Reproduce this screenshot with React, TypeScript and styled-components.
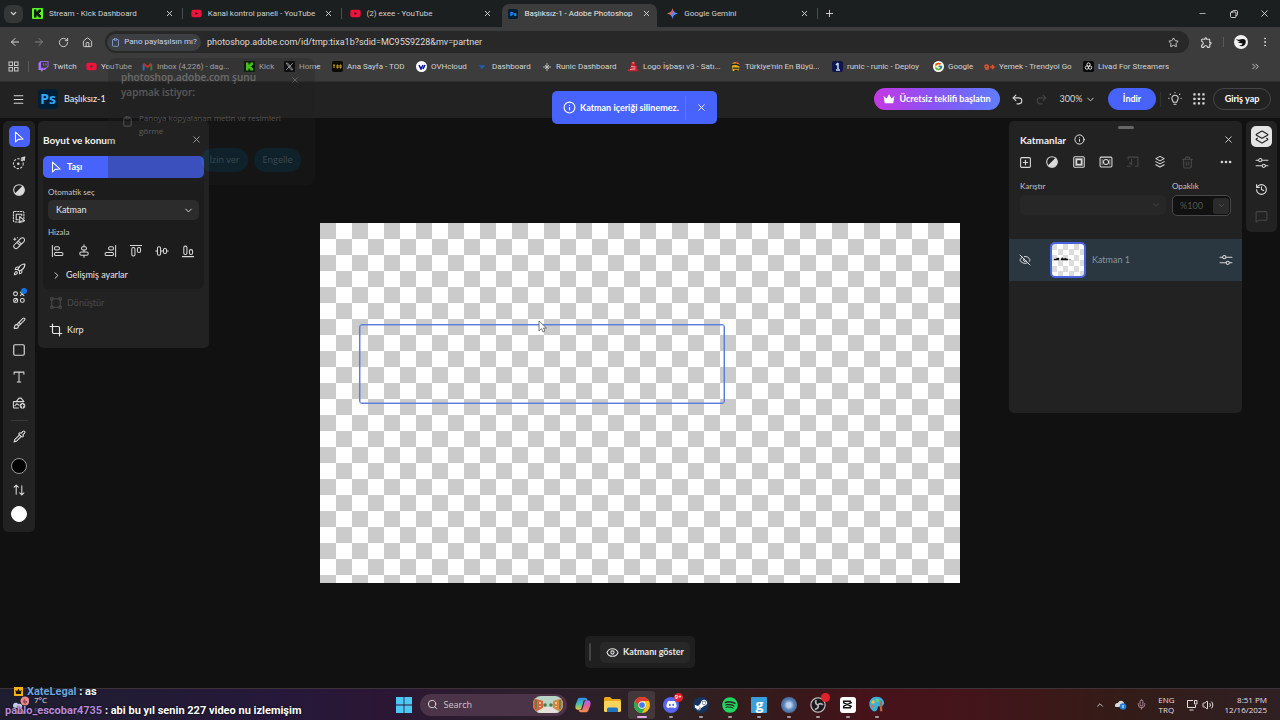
import React from "react";
import styled, { createGlobalStyle, css } from "styled-components";
import {
  ArrowLeft, ArrowRight, RotateCw, House, Star, EllipsisVertical, Ellipsis, Clipboard,
  X, ChevronDown, ChevronRight, ChevronUp, ChevronsRight, Plus, Minus, Menu, Info, Undo2, Redo2, Search,
  Square, EyeOff, Eye, Layers2, SquarePlus, Trash2, History, MessageSquare, Mic, Volume2, Crop,
  Rocket, Brush, Pipette,
} from "lucide-react";
import { FcGoogle } from "react-icons/fc";
import { MdOutlineExtension } from "react-icons/md";
import { FaTwitch, FaYoutube, FaSpotify, FaDiscord, FaSteamSymbol } from "react-icons/fa";

const ui = `Roboto, "Noto Sans", sans-serif`;
const system = `"Open Sans", "Noto Sans", sans-serif`;
const adobe = `Lato, "Open Sans", sans-serif`;

const GlobalStyle = createGlobalStyle`
  * { box-sizing: border-box; }
  body { margin: 0; background: #111; color: #e3e3e3; font-family: ${ui}; font-size: 8px; line-height: 12px; }
  button, input, select { font: inherit; color: inherit; }
  button { display: flex; align-items: center; justify-content: center; padding: 0; border: 0; background: none; flex: none; }
  a { color: inherit; text-decoration: none; }
  svg { display: block; flex: none; }
  h1, h2, p, ul { margin: 0; padding: 0; font-size: inherit; font-weight: inherit; list-style: none; }
`;

const Page = styled.div`
  position: relative;
  display: flex;
  flex-direction: column;
  min-height: 100vh;
`;

/* ---------- browser ---------- */
const TabStrip = styled.div`
  display: flex;
  align-items: center;
  height: 27px;
  padding: 0 0 0 4px;
  background: #1c1f1f;
`;
const TabSearch = styled.button`
  width: 19px;
  height: 18px;
  border-radius: 6px;
  background: #353737;
  margin-right: 3px;
`;
const Tabs = styled.div`
  display: flex;
  flex: 0 1 794px;
  min-width: 0;
  align-self: stretch;
  padding-top: 4px;
`;
const Tab = styled.div<{ $active?: boolean; $line?: boolean }>`
  position: relative;
  display: flex;
  align-items: center;
  gap: 6px;
  flex: 1 1 0;
  min-width: 0;
  margin-right: 4px;
  padding: 0 6px 4px;
  border-radius: 7px 7px 0 0;
  background: ${(p) => (p.$active ? "#3c3c3c" : "transparent")};
  color: ${(p) => (p.$active ? "#e8e8e8" : "#cfd1d1")};
  ${(p) => p.$line && css`
    &::after { content: ""; position: absolute; right: -2px; top: 4px; width: 1px; height: 11px; background: #4a4c4c; }
  `}
`;
const TabTitle = styled.span`
  flex: 1;
  min-width: 0;
  overflow: hidden;
  white-space: nowrap;
`;
const PlainButton = styled.button<{ $w: number; $color?: string }>`
  gap: 3px;
  width: ${(p) => p.$w}px;
  height: 20px;
  color: ${(p) => p.$color || "#d8d8d8"};
`;
const WindowButtons = styled.div`
  display: flex;
  margin-left: auto;
`;
const AddressRow = styled.div`
  display: flex;
  align-items: center;
  height: 28px;
  padding: 2px 5px 0 3px;
  background: #3c3c3c;
`;
const Omnibox = styled.div`
  display: flex;
  align-items: center;
  flex: 1;
  min-width: 0;
  height: 22px;
  margin: 0 6px;
  padding: 0 6px 0 2px;
  border-radius: 11px;
  background: #282828;
`;
const PasteChip = styled.button`
  gap: 4px;
  width: 94px;
  height: 17px;
  border-radius: 9px;
  background: #3d3e42;
  color: #c3d3f5;
  svg { color: #8fb0ea; }
`;
const UrlInput = styled.input`
  flex: 1;
  min-width: 0;
  padding: 0 0 0 6px;
  border: 0;
  outline: 0;
  background: transparent;
  color: #dcdcdc;
  font-size: 9px;
`;
const Divider = styled.span<{ $h: number; $c?: string; $m?: string }>`
  flex: none;
  width: 1px;
  height: ${(p) => p.$h}px;
  margin: ${(p) => p.$m || "0"};
  background: ${(p) => p.$c || "#5a5a5a"};
`;
const Avatar = styled.button`
  width: 14px;
  height: 14px;
  margin: 0 7px;
  border-radius: 50%;
  background: #f2f2f2;
`;
const BookmarkBar = styled.nav`
  display: flex;
  align-items: center;
  height: 26px;
  padding: 0 16px 3px 8px;
  background: #3c3c3c;
  color: #d2d2d2;
`;
const Bookmark = styled.a<{ $w: number }>`
  display: flex;
  align-items: center;
  gap: 4px;
  flex: 0 1 ${(p) => p.$w}px;
  min-width: 0;
  white-space: nowrap;
`;
const MoreBookmarks = styled.button`
  width: 18px;
  height: 20px;
  margin-left: auto;
`;
const Fav = styled.span<{ $bg?: string; $round?: boolean }>`
  display: flex;
  align-items: center;
  justify-content: center;
  flex: none;
  width: 11px;
  height: 11px;
  border-radius: ${(p) => (p.$round ? "50%" : "2px")};
  background: ${(p) => p.$bg || "transparent"};
`;

/* ---------- permission prompt ---------- */
const Prompt = styled.section`
  position: absolute;
  z-index: 5;
  left: 108px;
  top: 58px;
  width: 207px;
  height: 127px;
  padding: 12px 14px 0 13px;
  border-radius: 8px;
  background: #202020;
  color: #e3e3e3;
  font-family: ${system};
  opacity: 0.28;
`;
const PromptHead = styled.div`
  display: flex;
  justify-content: space-between;
  align-items: flex-start;
  font-size: 10px;
  font-weight: 600;
  line-height: 15px;
  h2 { width: 148px; }
`;
const PromptRow = styled.p`
  display: flex;
  gap: 6px;
  padding: 11px 0 0 1px;
  font-size: 8px;
  line-height: 13px;
  svg { margin-top: 5px; }
  span { width: 146px; }
`;
const PromptActions = styled.div`
  display: flex;
  justify-content: flex-end;
  gap: 6px;
  padding-top: 11px;
`;
const PromptButton = styled.button`
  width: 47px;
  height: 24px;
  border-radius: 12px;
  background: #0a4a70;
  color: #a4d4f0;
  font-size: 9px;
`;

/* ---------- editor ---------- */
const AppBar = styled.header`
  display: flex;
  align-items: center;
  height: 37px;
  padding: 0 9px 2px 8px;
  border-top: 1px solid #2f2f2f;
  background: #222;
  color: #f0f0f0;
  font-family: ${adobe};
  font-size: 9px;
`;
const Brand = styled.div`
  display: flex;
  align-items: center;
  gap: 6px;
  margin-left: 10px;
`;
const PsLogo = styled.span<{ $s: number }>`
  display: flex;
  align-items: center;
  justify-content: center;
  flex: none;
  width: ${(p) => p.$s}px;
  height: ${(p) => p.$s}px;
  border-radius: ${(p) => (p.$s > 12 ? 4 : 2)}px;
  background: #001e36;
  color: #31a8ff;
  font-family: ${system};
  font-size: ${(p) => (p.$s > 12 ? 14 : 6)}px;
  font-weight: 700;
`;
const AppBarRight = styled.div`
  display: flex;
  align-items: center;
  margin-left: auto;
`;
const Pill = styled.button<{ $w: number; $bg: string; $outline?: boolean }>`
  gap: 4px;
  width: ${(p) => p.$w}px;
  height: 22px;
  border-radius: 11px;
  background: ${(p) => p.$bg};
  ${(p) => p.$outline && "border: 1px solid #454545;"}
  color: #fff;
  font-weight: 700;
`;
const Toast = styled.div`
  position: absolute;
  z-index: 6;
  top: 91px;
  left: 0;
  right: 11px;
  display: flex;
  align-items: center;
  width: 165px;
  height: 33px;
  margin: 0 auto;
  padding-left: 11px;
  border-radius: 5px;
  background: #4763fb;
  color: #fff;
  font-family: ${adobe};
  font-size: 9px;
  font-weight: 700;
`;
const ToastText = styled.span`
  flex: 1;
  padding-left: 4px;
  white-space: nowrap;
`;
const Workspace = styled.main`
  position: relative;
  display: grid;
  grid-template-columns: minmax(0, 1fr) minmax(0, 2fr) minmax(0, 1fr);
  flex: 1;
  background: #111;
  font-family: ${adobe};
  font-size: 9px;
`;
const Dock = styled.div<{ $right?: boolean }>`
  display: flex;
  align-items: flex-start;
  justify-content: ${(p) => (p.$right ? "flex-end" : "flex-start")};
  gap: ${(p) => (p.$right ? 4 : 3)}px;
  padding: 3px;
`;
const Rail = styled.div<{ $w: number }>`
  display: flex;
  flex-direction: column;
  align-items: center;
  flex: none;
  width: ${(p) => p.$w}px;
  padding: 5px 0;
  border-radius: 5px;
  background: #222;
`;
const ToolGroup = styled.div<{ $h: number }>`
  display: flex;
  flex-direction: column;
  justify-content: space-between;
  min-height: ${(p) => p.$h}px;
`;
const Tool = styled.button<{ $bg?: string; $color?: string }>`
  position: relative;
  width: 21px;
  height: 21px;
  border-radius: 5px;
  background: ${(p) => p.$bg || "transparent"};
  color: ${(p) => p.$color || "#dadada"};
`;
const NewDot = styled.span`
  position: absolute;
  right: 0;
  top: 2px;
  width: 6px;
  height: 6px;
  margin-right: 3px;
  border-radius: 50%;
  background: #1473e6;
`;
const RailLine = styled.span`
  width: 17px;
  height: 1px;
  margin: 6px 0 5px;
  background: #3a3a3a;
`;
const Colors = styled.div`
  display: flex;
  flex-direction: column;
  align-items: center;
  gap: 6px;
  padding: 11px 0 5px;
`;
const Swatch = styled.button<{ $c: string }>`
  width: 16px;
  height: 16px;
  border: 1px solid ${(p) => (p.$c === "#000" ? "#9a9a9a" : "#fff")};
  border-radius: 50%;
  background: ${(p) => p.$c};
`;
const Panel = styled.section<{ $w: number; $h: number }>`
  flex: none;
  width: ${(p) => p.$w}px;
  min-height: ${(p) => p.$h}px;
  border-radius: 5px;
  background: #222;
`;
const PanelHead = styled.div`
  display: flex;
  align-items: center;
  justify-content: space-between;
  height: 35px;
  padding: 2px 3px 0 5px;
  color: #f4f4f4;
  h2 { font-size: 10px; font-weight: 700; }
`;
const MoveBlock = styled.div`
  margin: 0 5px;
  border-radius: 5px;
  background: #1c1c1c;
`;
const MoveButton = styled.button`
  justify-content: flex-start;
  gap: 4px;
  width: 100%;
  height: 22px;
  padding-left: 6px;
  border-radius: 5px;
  background: #4763fb;
  color: #fff;
  font-weight: 700;
`;
const FieldLabel = styled.label<{ $top?: number }>`
  display: block;
  padding: ${(p) => p.$top || 0}px 0 2px 5px;
  color: #c4c4c4;
  font-size: 8px;
  line-height: 12px;
`;
const SelectBox = styled.div<{ $muted?: boolean }>`
  display: flex;
  align-items: center;
  position: relative;
  height: 20px;
  border-radius: 5px;
  background: ${(p) => (p.$muted ? "#272727" : "#2c2c2c")};
  color: ${(p) => (p.$muted ? "#484848" : "#e6e6e6")};
  select {
    appearance: none;
    width: 100%;
    height: 100%;
    padding: 0 8px;
    border: 0;
    border-radius: 5px;
    background: transparent;
  }
  svg { position: absolute; right: 5px; pointer-events: none; }
`;
const MoveSelect = styled(SelectBox)`
  margin: 0 5px;
`;
const AlignRow = styled.div`
  display: flex;
  justify-content: space-between;
  padding: 1px 6px 0 5px;
`;
const PanelRow = styled.button<{ $h: number; $pad: number; $dim?: boolean }>`
  justify-content: flex-start;
  gap: 4px;
  width: 100%;
  height: ${(p) => p.$h}px;
  padding-left: ${(p) => p.$pad}px;
  color: ${(p) => (p.$dim ? "#4a4a4a" : "#e6e6e6")};
`;
const Stage = styled.div`
  display: flex;
  align-items: center;
`;
const Canvas = styled.div`
  position: relative;
  width: 100%;
  aspect-ratio: 16 / 9;
  background: conic-gradient(#fff 25%, #cbcbcb 0 50%, #fff 0 75%, #cbcbcb 0) 0 0 / 32px 32px;
`;
const Selection = styled.div`
  position: absolute;
  left: 39px;
  top: 101px;
  width: 366px;
  height: 80px;
  border: 1px solid #5b7ddc;
  border-radius: 3px;
  box-shadow: inset 0 0 0 1px rgba(91, 125, 220, 0.45);
`;
const Pointer = styled.svg`
  position: absolute;
  left: 218px;
  top: 97px;
`;
const ContextBar = styled.div`
  position: absolute;
  left: 0;
  right: 0;
  bottom: 20px;
  display: flex;
  align-items: center;
  justify-content: space-between;
  width: 110px;
  height: 32px;
  margin: 0 auto;
  padding: 0 5px 0 4px;
  border-radius: 5px;
  background: #1f1f1f;
`;
const BarHandle = styled.span`
  width: 2px;
  height: 18px;
  border-radius: 1px;
  background: #444;
`;
const ShowLayer = styled.button`
  gap: 4px;
  width: 90px;
  height: 21px;
  border-radius: 5px;
  background: #282828;
  color: #e6e6e6;
  font-weight: 700;
`;

/* layers */
const LayersTop = styled.div`
  height: 8px;
  padding-top: 5px;
`;
const Grip = styled.span`
  display: block;
  width: 16px;
  height: 3px;
  margin: 0 auto;
  border-radius: 2px;
  background: #666;
`;
const LayersHead = styled.div`
  display: flex;
  align-items: center;
  gap: 8px;
  height: 21px;
  padding: 0 4px 0 11px;
  color: #f0f0f0;
  h2 { font-size: 10px; font-weight: 700; }
  button { margin-left: auto; }
`;
const LayerTools = styled.div`
  display: flex;
  align-items: center;
  height: 24px;
  padding: 0 6px;
`;
const LayerTool = styled.button<{ $dim?: boolean }>`
  width: 20px;
  height: 20px;
  margin-right: 7px;
  color: ${(p) => (p.$dim ? "#484848" : "#dadada")};
  &:last-child { margin: 0 0 0 auto; }
`;
const BlendRow = styled.div`
  display: flex;
  gap: 6px;
  padding: 6px 11px 0;
`;
const Blend = styled.div<{ $w?: number }>`
  flex: ${(p) => (p.$w ? `none` : "1")};
  ${(p) => p.$w && `width: ${p.$w}px;`}
  label { padding-left: 0; padding-bottom: 3px; }
`;
const OpacityBox = styled.div`
  display: flex;
  align-items: center;
  height: 21px;
  padding: 1px;
  border: 1px solid #484848;
  border-radius: 5px;
  background: #111;
  color: #555;
  input { flex: 1; min-width: 0; padding: 0 0 0 6px; border: 0; background: transparent; }
  button { width: 16px; height: 16px; border-radius: 3px; background: #2b2b2b; }
`;
const LayerRow = styled.div`
  display: flex;
  align-items: center;
  height: 42px;
  margin-top: 23px;
  padding: 0 5px 0 6px;
  background: #2a3640;
`;
const Thumb = styled.span`
  display: flex;
  width: 36px;
  height: 36px;
  margin: 0 6px 0 15px;
  border: 2px solid #4a63e0;
  border-radius: 5px;
  background: conic-gradient(#fff 25%, #dcdcdc 0 50%, #fff 0 75%, #dcdcdc 0) 0 0 / 11px 11px;
`;
const LayerName = styled.span`
  flex: 1;
  color: #8b959c;
`;

/* ---------- taskbar ---------- */
const Taskbar = styled.footer`
  display: grid;
  grid-template-columns: minmax(0, 1fr) auto minmax(0, 1fr);
  align-items: center;
  height: 32px;
  border-top: 1px solid #3d3238;
  font-family: ${system};
  background: linear-gradient(90deg, #1e1e30 0%, #26183a 22%, #2b1634 30%, #2c1d2e 38%, #2e2224 52%, #38181a 62%, #47121a 68%, #43151a 76%, #331c17 88%, #2f2024 100%);
`;
const Weather = styled.div`
  display: flex;
  align-items: center;
  gap: 5px;
  padding: 0 12px;
  color: #e0e0e0;
  line-height: 10px;
  small { display: block; font-size: 8px; color: #5c5768; }
`;
const Apps = styled.div`
  display: flex;
  align-items: center;
  padding-left: 1px;
`;
const Pinned = styled.div`
  display: flex;
  justify-content: space-between;
  width: 321px;
`;
const AppButton = styled.button<{ $active?: boolean; $run?: boolean }>`
  position: relative;
  width: 27px;
  height: 28px;
  border-radius: 3px;
  background: ${(p) => (p.$active ? "rgba(255,255,255,.1)" : "transparent")};
  ${(p) => (p.$run || p.$active) && css`
    &::after {
      content: "";
      position: absolute;
      bottom: 1px;
      width: ${p.$active ? 10 : 4}px;
      height: 2px;
      border-radius: 1px;
      background: ${p.$active ? "#e6a8e6" : "#a89a9e"};
    }
  `}
`;
const SearchBox = styled.label`
  display: flex;
  align-items: center;
  gap: 6px;
  width: 147px;
  height: 22px;
  margin: 0 3px 0 2px;
  padding: 0 4px 0 7px;
  border-radius: 11px;
  background: #4b3448;
  input {
    flex: 1;
    min-width: 0;
    padding: 0;
    border: 0;
    background: transparent;
    font-size: 9px;
    &::placeholder { color: #d0c4cf; opacity: 1; }
  }
`;
const Badge = styled.span`
  position: absolute;
  top: 2px;
  right: 2px;
  width: 9px;
  height: 9px;
  border-radius: 50%;
  background: #e0222c;
  color: #fff;
  font-size: 6px;
  font-weight: 600;
  line-height: 9px;
`;
const Tray = styled.div`
  display: flex;
  align-items: center;
  justify-content: flex-end;
  padding-right: 13px;
  line-height: 10px;
  color: #e6dfe0;
`;
const TrayIcons = styled.div<{ $gap: number }>`
  display: flex;
  align-items: center;
  gap: ${(p) => p.$gap}px;
`;
const TrayText = styled.div<{ $right?: boolean }>`
  margin: 0 ${(p) => (p.$right ? 0 : 11)}px 0 11px;
  text-align: ${(p) => (p.$right ? "right" : "center")};
`;
const Chat = styled.ul`
  position: absolute;
  z-index: 7;
  left: 5px;
  bottom: 0;
  color: #fff;
  font-family: Roboto, sans-serif;
  font-size: 11px;
  font-weight: 700;
  line-height: 13px;
`;
const ChatLine = styled.li`
  display: flex;
  align-items: center;
  gap: 4px;
  height: 19px;
  text-shadow: 0 0 2px #000;
`;
const ChatUser = styled.span<{ $c: string }>`
  color: ${(p) => p.$c};
`;
const ChatBadge = styled.span`
  display: flex;
  align-items: center;
  justify-content: center;
  width: 9px;
  height: 9px;
  margin-left: 9px;
  background: #f5b315;
`;

/* ---------- drawings ---------- */
type GlyphProps = { size?: number; children: React.ReactNode; w?: number };
const Glyph = ({ size = 14, w = 1.5, children }: GlyphProps) => (
  <svg width={size} height={size} viewBox="0 0 20 20" fill="none" stroke="currentColor" strokeWidth={w} strokeLinecap="round" strokeLinejoin="round" aria-hidden>
    {children}
  </svg>
);
const MoveGlyph = () => <Glyph><path d="M5 3v14l4-3.6L16 13z" /></Glyph>;
const SelectGlyph = () => (
  <Glyph>
    <circle cx="9" cy="11" r="7" strokeDasharray="2.200 3" />
    <circle cx="9" cy="11" r="1.800" fill="currentColor" stroke="none" />
    <path d="M14 6.500l4.500-5M13.500 3l4.500-1.500-.5 5z" />
  </Glyph>
);
const AdjustGlyph = () => (
  <Glyph>
    <circle cx="10" cy="10" r="7.600" />
    <path d="M15 5A7 7 0 0 1 5 15z" fill="currentColor" />
  </Glyph>
);
const RectSelectGlyph = () => (
  <Glyph>
    <rect x="2" y="2" width="15" height="15" rx="2" strokeDasharray="2 2" />
    <path d="M9 14H6V6h8v2" />
    <path d="M11 9v9l3-2.400 4-.2z" fill="#222" />
  </Glyph>
);
const HealGlyph = () => (
  <Glyph>
    <path d="M3.500 12.500l9-9a3 3 0 0 1 4.500 4.500l-9 9a3 3 0 0 1-4.500-4.500zM7 9l4.500 4.500M9 7l4.500 4.500M4 3v3M2.500 4.500h3M8 2v.5" />
  </Glyph>
);
const GenerateGlyph = () => (
  <Glyph>
    <circle cx="5" cy="5.500" r="2.800" /><path d="M12 3l5 5M12 8l3-3" />
    <rect x="2.500" y="12" width="5.500" height="5.500" rx="1.500" /><rect x="12" y="12" width="5.500" height="5.500" rx="2.500" />
    <path d="M4 16l3-3" />
  </Glyph>
);
const TypeGlyph = () => <Glyph><path d="M3 6V3h14v3M10 3v14M7.500 17h5" /></Glyph>;
const AddImageGlyph = () => (
  <Glyph>
    <path d="M9 17H3a1 1 0 0 1-1-1V9a1 1 0 0 1 1-1h13M6 8l4-5h3l4 5M4 14l3-3 3 2" />
    <circle cx="15" cy="14" r="4" fill="currentColor" stroke="none" />
    <path d="M15 12v4M13 14h4" stroke="#222" />
  </Glyph>
);
const SwapGlyph = () => <Glyph><path d="M6 16V3M3 6l3-3 3 3M14 4v13M11 14l3 3 3-3" /></Glyph>;
const TransformGlyph = () => (
  <Glyph>
    <rect x="4" y="4" width="12" height="12" />
    {[[4, 4], [16, 4], [4, 16], [16, 16]].map(([x, y]) => <rect key={`${x}-${y}`} x={x - 1.5} y={y - 1.5} width="3" height="3" fill="#222" />)}
  </Glyph>
);
const RestoreGlyph = () => <Glyph size={10} w={1.8}><rect x="3" y="6" width="11" height="11" rx="2" /><path d="M7 6V5a2 2 0 0 1 2-2h6a2 2 0 0 1 2 2v6a2 2 0 0 1-2 2h-1" /></Glyph>;
const alignShapes = [
  <><path d="M2 2v16" /><rect x="5" y="4" width="7" height="4.500" rx="2" /><rect x="5" y="12" width="12" height="4.500" rx="2" /></>,
  <><path d="M10 1v2.500M10 8.500V11M10 16v3" /><rect x="6.500" y="4" width="7" height="4.500" rx="2" /><rect x="4" y="11.500" width="12" height="4.500" rx="2" /></>,
  <><path d="M18 2v16" /><rect x="8" y="4" width="7" height="4.500" rx="2" /><rect x="3" y="12" width="12" height="4.500" rx="2" /></>,
  <><path d="M2 2h16" /><rect x="4" y="5" width="4.500" height="12" rx="2" /><rect x="12" y="5" width="4.500" height="7" rx="2" /></>,
  <><path d="M1 10h2M8.500 10h3M17 10h2" /><rect x="3.500" y="4" width="4.500" height="12" rx="2" /><rect x="12" y="6.500" width="4.500" height="7" rx="2" /></>,
  <><path d="M2 18h16" /><rect x="4" y="3" width="4.500" height="12" rx="2" /><rect x="12" y="8" width="4.500" height="7" rx="2" /></>,
];
const alignNames = ["Sola", "Yatay ortaya", "Sağa", "Üste", "Dikey ortaya", "Alta"];
const GroupGlyph = () => <Glyph><rect x="2.500" y="2.500" width="15" height="15" rx="1.500" /><rect x="6.500" y="6.500" width="7" height="7" strokeWidth="2" /><path d="M5 5h10v10H5z" opacity=".5" /></Glyph>;
const MaskGlyph = () => <Glyph><rect x="1.500" y="3" width="17" height="14" rx="1.500" /><circle cx="10" cy="10" r="3.600" /><path d="M4.500 6v8M15.500 6v8" opacity=".6" /></Glyph>;
const ClipGlyph = () => <Glyph><path d="M3 6V3h14v13h-4M8 6v8M5 11l3 3M2 16h4" /></Glyph>;
const StackGlyph = () => <Glyph><path d="M10 2l6 3.200-6 3.200-6-3.200zM4 9.500l6 3.200 6-3.200M4 14l6 3.200L16 14" /></Glyph>;
const SlidersGlyph = () => <Glyph><path d="M1.500 6H5M10 6h8.500M1.500 14H10M15 14h3.500" /><circle cx="7.500" cy="6" r="2.300" /><circle cx="12.500" cy="14" r="2.300" /></Glyph>;
const BulbGlyph = () => <Glyph><path d="M7.500 14.500c0-2-2-2.500-2-5.500a4.500 4.500 0 0 1 9 0c0 3-2 3.500-2 5.500zM8.500 17.500h3M10 1V.8M3 3l.5.5M17 3l-.5.5M1 9h.5M18.500 9h.5" /></Glyph>;
const AppsGlyph = () => (
  <svg width="12" height="12" viewBox="0 0 12 12" fill="currentColor" aria-hidden>
    {[0, 4.5, 9].map((y) => [0, 4.5, 9].map((x) => <rect key={`${x}-${y}`} x={x + 0.3} y={y + 0.3} width="2.300" height="2.300" rx=".4" />))}
  </svg>
);
const Crown = ({ size = 12, color = "#fff" }) => (
  <svg width={size} height={size} viewBox="0 0 20 20" fill={color} aria-hidden>
    <path d="M1 5l5 4 4-7 4 7 5-4-2 12H3z" />
  </svg>
);
const Kick = ({ bg, fg }: { bg: string; fg: string }) => (
  <svg width="11" height="11" viewBox="0 0 11 11" aria-hidden>
    <rect width="11" height="11" rx="1" fill={bg} />
    <path d="M2 1.500h2.500v2h1v-1h1v-1h2.500v2.500h-1v1h-1v1h1v1h1v2.500h-2.500v-1h-1v-1h-1v2H2z" fill={fg} />
  </svg>
);
const Spark = () => (
  <svg width="11" height="11" viewBox="0 0 20 20" aria-hidden>
    <defs><linearGradient id="gem" x1="0" y1=".2" x2="1" y2=".8"><stop offset="0" stopColor="#f6b73c" /><stop offset=".35" stopColor="#e0605a" /><stop offset=".6" stopColor="#4b8df8" /><stop offset="1" stopColor="#3a8ef0" /></linearGradient></defs>
    <path d="M10 0c1 6 4 9 10 10-6 1-9 4-10 10-1-6-4-9-10-10C6 9 9 6 10 0z" fill="url(#gem)" />
  </svg>
);
const Gmail = () => (
  <svg width="11" height="11" viewBox="0 0 20 20" fill="none" strokeWidth="3.500" aria-hidden>
    <path d="M3 17V5" stroke="#4285f4" /><path d="M17 17V5" stroke="#34a853" /><path d="M3 5l7 6 7-6" stroke="#ea4335" />
  </svg>
);
const XLogo = () => (
  <svg width="11" height="11" viewBox="0 0 20 20" aria-hidden>
    <rect width="20" height="20" rx="2" fill="#0a0a0a" />
    <path d="M4 4h3l9 12h-3zM16 4L4 16" stroke="#ddd" strokeWidth="1.500" fill="none" />
  </svg>
);
const Chess = () => (
  <svg width="12" height="11" viewBox="0 0 20 18" aria-hidden>
    <path d="M8 1h5l1 6 3 1-1 5 3 1v3H1v-3l4-1 1-5z" fill="#c8202f" /><path d="M9 3h3M7 9l7 1M5 14l9-1" stroke="#f5dede" strokeWidth="1.300" fill="none" />
  </svg>
);
const Bee = () => (
  <svg width="11" height="11" viewBox="0 0 20 20" aria-hidden>
    <path d="M3 7c3-8 13-6 15 1l-3 10H5z" fill="#e9b21e" /><path d="M2 8c4-3 12-3 16 1M5 13h11M8 17h6" stroke="#222" strokeWidth="2.500" fill="none" /><circle cx="12" cy="3" r="2" fill="#c33" />
  </svg>
);
const Knot = () => (
  <svg width="11" height="11" viewBox="0 0 20 20" aria-hidden>
    <rect width="20" height="20" rx="3" fill="#0a0a0a" />
    <g fill="none" stroke="#fff" strokeWidth="1.500"><circle cx="10" cy="6.500" r="3" /><circle cx="7" cy="12" r="3" /><circle cx="13" cy="12" r="3" /></g>
  </svg>
);
const GridGlyph = () => (
  <svg width="11" height="11" viewBox="0 0 11 11" fill="none" stroke="#c8c8c8" aria-hidden>
    {[1, 6.5].map((y) => [1, 6.5].map((x) => <rect key={`${x}-${y}`} x={x} y={y} width="3.500" height="3.500" />))}
  </svg>
);
const Swirl = () => (
  <svg width="14" height="14" viewBox="0 0 14 14" aria-hidden><path d="M2 4c3 1.500 5 0 7 0 3 0 3.500 3 2 5.500C10 11.500 7 11.500 5 10.500c2 0 3.500-1 3.500-2C7 8 4.500 8 3.500 7l3-.3C4.500 6.200 3 5.500 2 4z" fill="#111" /></svg>
);
const WindowsLogo = () => (
  <svg width="16" height="16" viewBox="0 0 16 16" fill="#4cc8f5" aria-hidden>
    <path d="M0 0h7.600v7.600H0zM8.400 0H16v7.600H8.400zM0 8.400h7.600V16H0zM8.400 8.400H16V16H8.400z" />
  </svg>
);
const SearchArt = () => (
  <svg width="30" height="17" viewBox="0 0 30 17" aria-hidden>
    <defs><clipPath id="art"><rect width="30" height="17" rx="8" /></clipPath></defs>
    <g clipPath="url(#art)">
      <rect width="30" height="17" fill="#b9d3c4" /><path d="M0 2l10 3v7L0 17z" fill="#d2683f" /><path d="M30 2l-10 3v7l10 5z" fill="#d88745" />
      <path d="M11 11h8l8 6H3z" fill="#e6e0dc" /><path d="M3 4v9M27 4v9" stroke="#4b7e56" strokeWidth="1.500" /><path d="M7 6v2M23 6v2M7 10v1M23 10v1" stroke="#f0d9a0" strokeWidth="1.500" /><circle cx="12" cy="9" r="1.800" fill="#4c7c49" /><circle cx="18" cy="9" r="1.800" fill="#4c7c49" />
    </g>
  </svg>
);
const Copilot = () => (
  <svg width="16" height="16" viewBox="0 0 20 20" aria-hidden>
    <defs>
      <linearGradient id="copA" x1="0" y1="0" x2="0" y2="1"><stop offset="0" stopColor="#2a8df0" /><stop offset=".5" stopColor="#3fc0b0" /><stop offset="1" stopColor="#e8c63c" /></linearGradient>
      <linearGradient id="copB" x1="0" y1="0" x2="0" y2="1"><stop offset="0" stopColor="#9b6cf0" /><stop offset=".5" stopColor="#e0609a" /><stop offset="1" stopColor="#f79048" /></linearGradient>
    </defs>
    <path d="M6 1h7c1.500 0 2 1.500 2.500 3H11L8 14.500C7.500 16 6 16 5 16H4C0 16 0 12 1 9l2-5c.6-2 1.500-3 3-3z" fill="url(#copA)" />
    <path d="M14 19H7c-1.500 0-2-1.500-2.500-3H9l3-10.500C12.500 4 14 4 15 4h1c4 0 4 4 3 7l-2 5c-.6 2-1.500 3-3 3z" fill="url(#copB)" />
  </svg>
);
const Folder = () => (
  <svg width="17" height="15" viewBox="0 0 17 15" aria-hidden>
    <path d="M0 1.500A1.500 1.500 0 0 1 1.500 0H6l2 2h7.500A1.500 1.500 0 0 1 17 3.500V12H0z" fill="#e8a91c" /><rect y="4" width="17" height="11" rx="1.500" fill="#fbd35a" /><path d="M3 15v-3a1.500 1.500 0 0 1 1.500-1.500h8A1.500 1.500 0 0 1 14 12v3z" fill="#1f74c4" />
  </svg>
);
const Chrome = () => (
  <svg width="16" height="16" viewBox="0 0 24 24" aria-hidden>
    <circle cx="12" cy="12" r="12" fill="#fbc116" /><path d="M1.600 6A12 12 0 0 1 22.400 6H12z" fill="#e33b2e" /><path d="M1.600 6A12 12 0 0 0 12 24l5.200-9L12 12 6.800 15z" fill="#2da94f" /><path d="M1.600 6L6.800 15 12 6z" fill="#e33b2e" /><path d="M1.600 6A12 12 0 0 0 1 16l5.800-1z" fill="#2da94f" />
    <circle cx="12" cy="12" r="5.500" fill="#fff" /><circle cx="12" cy="12" r="4.300" fill="#3b7ded" />
  </svg>
);
const Disc = styled.span<{ $bg: string; $r?: number }>`
  display: flex;
  align-items: center;
  justify-content: center;
  width: 16px;
  height: 16px;
  border-radius: ${(p) => p.$r ?? 8}px;
  background: ${(p) => p.$bg};
  color: #fff;
  font-size: 14px;
  font-weight: 700;
  line-height: 14px;
`;
const Obs = () => (
  <svg width="16" height="16" viewBox="0 0 20 20" aria-hidden>
    <circle cx="10" cy="10" r="9" fill="#8f8a8c" stroke="#c9c4c6" strokeWidth="1.300" />
    <circle cx="10" cy="10" r="8" fill="#1a181a" />
    <path d="M8 4a3.600 3.600 0 0 0 2 6M16 10a3.600 3.600 0 0 0-6 0M6 15a3.600 3.600 0 0 0 4-5" stroke="#b9b4b6" strokeWidth="2.200" fill="none" />
  </svg>
);
const CapCut = () => (
  <svg width="11" height="11" viewBox="0 0 20 20" fill="none" stroke="#111" strokeWidth="2.500" aria-hidden><path d="M15 7V4H3v3l15 7M15 13v3H3v-3l15-7" /></svg>
);
const Palette = () => (
  <svg width="17" height="17" viewBox="0 0 20 20" aria-hidden>
    <path d="M10 1c6 0 9 4 9 8l-3 4-4-1-1 3c-1 4-5 4-7 1C-1 10 2 1 10 1z" fill="#37b1d8" /><circle cx="6" cy="7" r="2" fill="#f5c04a" /><circle cx="11" cy="5" r="1.800" fill="#7fd06a" /><circle cx="5" cy="12" r="1.800" fill="#e66a4e" /><path d="M14 7l2-2 1 13h-3z" fill="#b06c3e" />
  </svg>
);
const WeatherArt = () => (
  <svg width="17" height="20" viewBox="0 0 17 20" aria-hidden>
    <circle cx="13" cy="6" r="4.500" fill="#e98a8a" /><path d="M1 11c0-4 4-4 5-2 3-1 5 1 4 4H3c-1 0-2-1-2-2z" fill="#c3cfec" /><path d="M13 4.500c-2 1-1.500 4 .5 3.500s1-2.500-1-1.500" stroke="#5a2a3a" fill="none" /><path d="M4 16c2-1 8-1 10 1l-2 2H5z" fill="#d8914e" />
  </svg>
);
const NetGlyph = () => (
  <svg width="12" height="12" viewBox="0 0 12 12" fill="none" stroke="currentColor" aria-hidden><path d="M7 1.500H1.500v7h8V6M3.500 11h4M8.500 1.500h2.500V5H8.500z" /></svg>
);
const CloudArt = () => (
  <svg width="13" height="11" viewBox="0 0 13 11" aria-hidden><path d="M1 7c0-3 2-3 3-3 1-3 5-3 6 0l1 4H3C2 8 1 8 1 7z" fill="#ded8d8" /><circle cx="9" cy="7.500" r="3.300" fill="#1c7ed6" /><path d="M9 6v3" stroke="#fff" /></svg>
);
const ThumbArt = () => (
  <svg width="32" height="32" viewBox="0 0 32 32" aria-hidden><path d="M2 15h2l1-1h2v2H2zM9 15l1-1.500 2 1.500 1-1 2 1h1v1H9zM17 15.500h2" fill="#111" stroke="#111" strokeWidth=".4" /></svg>
);

/* ---------- data ---------- */
const tabs = [
  { title: "Stream - Kick Dashboard", icon: <Kick bg="#53fc18" fg="#0b1a06" />, line: true },
  { title: "Kanal kontrol paneli - YouTube", icon: <FaYoutube size={11} color="#f0113c" />, line: true },
  { title: "(2) exee - YouTube", icon: <FaYoutube size={11} color="#f0113c" /> },
  { title: "Başlıksız-1 - Adobe Photoshop", icon: <PsLogo $s={10}>Ps</PsLogo>, active: true },
  { title: "Google Gemini", icon: <Spark />, line: true },
];
const bookmarks = [
  { w: 48, label: "Twitch", icon: <FaTwitch size={11} color="#a970ff" /> },
  { w: 56, label: "YouTube", icon: <FaYoutube size={11} color="#f0113c" /> },
  { w: 102, label: "Inbox (4,226) - dag...", icon: <Gmail /> },
  { w: 40, label: "Kick", icon: <Kick bg="#0b1a06" fg="#53fc18" /> },
  { w: 48, label: "Home", icon: <XLogo /> },
  { w: 84, label: "Ana Sayfa - TOD", icon: <Fav $bg="#0c0a05"><svg width="9" height="5" viewBox="0 0 9 5" fill="none" stroke="#d9a520" aria-hidden><path d="M0 1h2M1 1v3M4 1h1v3H4zM7 1h1v3H7z" /></svg></Fav> },
  { w: 61, label: "OVHcloud", icon: <Fav $bg="#fff" $round><svg width="8" height="6" viewBox="0 0 8 6" aria-hidden><path d="M1 1l2 4 2-4M5 5l2-4" stroke="#000e9c" strokeWidth="1.500" fill="none" /></svg></Fav> },
  { w: 64, label: "Dashboard", icon: <Fav><svg width="9" height="6" viewBox="0 0 10 8" fill="#1d5fae" aria-hidden><path d="M0 1l4 1 5-1-2 3-3 3-2-3z" /></svg></Fav> },
  { w: 86, label: "Runic Dashboard", icon: <Fav><svg width="8" height="8" viewBox="0 0 8 8" stroke="#d0d0d0" aria-hidden><path d="M4 0v8M0 4h8M2 2l4 4M6 2L2 6" strokeWidth=".8" /></svg></Fav> },
  { w: 103, label: "Logo İşbaşı v3 - Satı...", icon: <Chess /> },
  { w: 102, label: "Türkiye'nin En Büyü...", icon: <Bee /> },
  { w: 101, label: "runic - runic - Deploy", icon: <Fav $bg="#10164d"><svg width="6" height="9" viewBox="0 0 6 9" fill="none" stroke="#bfe3f5" strokeWidth="1.500" aria-hidden><path d="M3 1v6M1 3l2-2M1 8h4" /></svg></Fav> },
  { w: 51, label: "Google", icon: <Fav $bg="#fff" $round><FcGoogle size={9} /></Fav> },
  { w: 99, label: "Yemek - Trendyol Go", icon: <Fav><svg width="11" height="6" viewBox="0 0 11 6" fill="none" stroke="#e0532a" strokeWidth="1.500" aria-hidden><circle cx="2.500" cy="2.500" r="1.600" /><path d="M4 1v4H1M6 3h4M8 1l2 2-2 2" /></svg></Fav> },
  { w: 90, label: "Livad For Streamers", icon: <Knot /> },
];

function LayersPanel() {
  return (
    <Panel $w={233} $h={292}>
      <LayersTop><Grip /></LayersTop>
      <LayersHead>
        <h2>Katmanlar</h2>
        <Info size={11} />
        <PlainButton $w={20} aria-label="Kapat"><X size={11} /></PlainButton>
      </LayersHead>
      <LayerTools>
        <LayerTool aria-label="Katman ekle"><SquarePlus size={13} /></LayerTool>
        <LayerTool aria-label="Ayar katmanı"><AdjustGlyph /></LayerTool>
        <LayerTool aria-label="Grup"><GroupGlyph /></LayerTool>
        <LayerTool aria-label="Maske"><MaskGlyph /></LayerTool>
        <LayerTool $dim aria-label="Kırpma maskesi"><ClipGlyph /></LayerTool>
        <LayerTool aria-label="Birleştir"><StackGlyph /></LayerTool>
        <LayerTool $dim aria-label="Sil"><Trash2 size={13} /></LayerTool>
        <LayerTool aria-label="Diğer"><Ellipsis size={14} strokeWidth={2.5} /></LayerTool>
      </LayerTools>
      <BlendRow>
        <Blend>
          <FieldLabel htmlFor="blend">Karıştır</FieldLabel>
          <SelectBox $muted>
            <select id="blend" disabled><option> </option></select>
            <ChevronDown size={10} />
          </SelectBox>
        </Blend>
        <Blend $w={59}>
          <FieldLabel htmlFor="opacity">Opaklık</FieldLabel>
          <OpacityBox>
            <input id="opacity" defaultValue="%100" />
            <button aria-label="Opaklık seç"><ChevronDown size={9} /></button>
          </OpacityBox>
        </Blend>
      </BlendRow>
      <LayerRow>
        <PlainButton $w={20} aria-label="Görünürlük"><EyeOff size={12} /></PlainButton>
        <Thumb><ThumbArt /></Thumb>
        <LayerName>Katman 1</LayerName>
        <PlainButton $w={22} aria-label="Katman özellikleri"><SlidersGlyph /></PlainButton>
      </LayerRow>
    </Panel>
  );
}

export default function App() {
  return (
    <Page>
      <GlobalStyle />
      <TabStrip>
        <TabSearch aria-label="Sekme ara"><ChevronDown size={9} strokeWidth={3} /></TabSearch>
        <Tabs>
          {tabs.map((t) => (
            <Tab key={t.title} $active={t.active} $line={t.line}>
              {t.icon}
              <TabTitle>{t.title}</TabTitle>
              <PlainButton $w={10} aria-label="Kapat"><X size={9} strokeWidth={2.5} /></PlainButton>
            </Tab>
          ))}
        </Tabs>
        <PlainButton $w={18} aria-label="Yeni sekme"><Plus size={11} /></PlainButton>
        <WindowButtons>
          <PlainButton $w={31} aria-label="Küçült"><Minus size={9} /></PlainButton>
          <PlainButton $w={31} aria-label="Geri yükle"><RestoreGlyph /></PlainButton>
          <PlainButton $w={31} aria-label="Pencereyi kapat"><X size={11} /></PlainButton>
        </WindowButtons>
      </TabStrip>
      <AddressRow>
        <PlainButton $w={24} aria-label="Geri"><ArrowLeft size={12} /></PlainButton>
        <PlainButton $w={24} $color="#808080" aria-label="İleri"><ArrowRight size={12} /></PlainButton>
        <PlainButton $w={24} aria-label="Yenile"><RotateCw size={11} /></PlainButton>
        <PlainButton $w={24} aria-label="Ana sayfa"><House size={11} /></PlainButton>
        <Omnibox>
          <PasteChip><Clipboard size={9} />Pano paylaşılsın mı?</PasteChip>
          <UrlInput aria-label="Adres" defaultValue="photoshop.adobe.com/id/tmp:tixa1b?sdid=MC95S9228&mv=partner" />
          <PlainButton $w={20} aria-label="Yer işareti ekle"><Star size={11} /></PlainButton>
        </Omnibox>
        <PlainButton $w={22} aria-label="Uzantılar"><MdOutlineExtension size={13} /></PlainButton>
        <Divider $h={10} $m="0 3px 0 6px" />
        <Avatar aria-label="Profil"><Swirl /></Avatar>
        <PlainButton $w={20} aria-label="Menü"><EllipsisVertical size={12} /></PlainButton>
      </AddressRow>
      <BookmarkBar>
        <GridGlyph />
        <Divider $h={11} $m="0 9px" />
        {bookmarks.map((b) => (
          <Bookmark key={b.label} $w={b.w} href="#">{b.icon}<span>{b.label}</span></Bookmark>
        ))}
        <MoreBookmarks aria-label="Diğer yer işaretleri"><ChevronsRight size={11} /></MoreBookmarks>
      </BookmarkBar>

      <AppBar>
        <PlainButton $w={20} aria-label="Uygulama menüsü"><Menu size={13} /></PlainButton>
        <Brand>
          <PsLogo $s={20}>Ps</PsLogo>
          <h1>Başlıksız-1</h1>
        </Brand>
        <AppBarRight>
          <Pill $w={126} $bg="linear-gradient(90deg, #c538e4, #8a52f2 45%, #5f7dfb)"><Crown />Ücretsiz teklifi başlatın</Pill>
          <PlainButton $w={34} aria-label="Geri al"><Undo2 size={13} /></PlainButton>
          <PlainButton $w={14} $color="#444" aria-label="Yinele"><Redo2 size={13} /></PlainButton>
          <PlainButton $w={60} aria-label="Yakınlaştırma"><span>300%</span><ChevronDown size={11} /></PlainButton>
          <Pill $w={48} $bg="#4763fb">İndir</Pill>
          <Divider $h={15} $c="#333" $m="0 4px" />
          <PlainButton $w={20} aria-label="Keşfet"><BulbGlyph /></PlainButton>
          <PlainButton $w={28} aria-label="Uygulamalar"><AppsGlyph /></PlainButton>
          <Pill $w={58} $bg="transparent" $outline>Giriş yap</Pill>
        </AppBarRight>
      </AppBar>

      <Workspace>
        <Dock>
          <Rail $w={32}>
            <ToolGroup $h={288}>
              <Tool $bg="#4763fb" $color="#fff" aria-label="Taşı"><MoveGlyph /></Tool>
              <Tool aria-label="Seç"><SelectGlyph /></Tool>
              <Tool aria-label="Ayarla"><AdjustGlyph /></Tool>
              <Tool aria-label="Nesne seç"><RectSelectGlyph /></Tool>
              <Tool aria-label="Rötuş"><HealGlyph /></Tool>
              <Tool aria-label="Hızlı eylemler"><Rocket size={13} /></Tool>
              <Tool aria-label="Üret"><GenerateGlyph /><NewDot /></Tool>
              <Tool aria-label="Boya"><Brush size={13} /></Tool>
              <Tool aria-label="Şekil"><Square size={14} /></Tool>
              <Tool aria-label="Metin"><TypeGlyph /></Tool>
              <Tool aria-label="Görsel ekle"><AddImageGlyph /></Tool>
            </ToolGroup>
            <RailLine />
            <Tool aria-label="Damlalık"><Pipette size={13} /></Tool>
            <Colors>
              <Swatch $c="#000" aria-label="Ön plan" />
              <PlainButton $w={20} aria-label="Değiştir"><SwapGlyph /></PlainButton>
              <Swatch $c="#fff" aria-label="Arka plan" />
            </Colors>
          </Rail>
          <Panel $w={171} $h={227}>
            <PanelHead>
              <h2>Boyut ve konum</h2>
              <PlainButton $w={20} aria-label="Kapat"><X size={11} /></PlainButton>
            </PanelHead>
            <MoveBlock>
              <MoveButton><MoveGlyph />Taşı</MoveButton>
              <FieldLabel $top={8} htmlFor="auto">Otomatik seç</FieldLabel>
              <MoveSelect>
                <select id="auto"><option>Katman</option></select>
                <ChevronDown size={11} />
              </MoveSelect>
              <FieldLabel $top={6} as="p">Hizala</FieldLabel>
              <AlignRow>
                {alignShapes.map((shape, i) => (
                  <PlainButton key={alignNames[i]} $w={20} aria-label={`${alignNames[i]} hizala`}><Glyph>{shape}</Glyph></PlainButton>
                ))}
              </AlignRow>
              <PanelRow $h={28} $pad={8}><ChevronRight size={11} />Gelişmiş ayarlar</PanelRow>
            </MoveBlock>
            <PanelRow $h={27} $pad={11} $dim><TransformGlyph />Dönüştür</PanelRow>
            <PanelRow $h={27} $pad={11}><Crop size={14} />Kırp</PanelRow>
          </Panel>
        </Dock>
        <Stage>
          <Canvas>
            <Selection />
            <Pointer width="9" height="13" viewBox="0 0 9 13" aria-hidden><path d="M1 1v10l2.500-2.300L5 12l2-1-1.500-3H8.500z" fill="#fff" stroke="#555" strokeWidth=".8" /></Pointer>
          </Canvas>
        </Stage>
        <Dock $right>
          <LayersPanel />
          <Rail $w={31}>
            <ToolGroup $h={101}>
              <Tool $bg="#e4e4e4" $color="#222" aria-label="Katmanlar"><Layers2 size={14} /></Tool>
              <Tool aria-label="Özellikler"><SlidersGlyph /></Tool>
              <Tool aria-label="Geçmiş"><History size={13} /></Tool>
              <Tool $color="#474747" aria-label="Yorumlar"><MessageSquare size={13} /></Tool>
            </ToolGroup>
          </Rail>
        </Dock>
        <ContextBar>
          <BarHandle />
          <ShowLayer><Eye size={13} />Katmanı göster</ShowLayer>
        </ContextBar>
      </Workspace>

      <Taskbar>
        <Weather><WeatherArt /><span>7°C<small>Partly sunny</small></span></Weather>
        <Apps>
          <AppButton aria-label="Başlat"><WindowsLogo /></AppButton>
          <SearchBox><Search size={11} /><input placeholder="Search" aria-label="Search" /><SearchArt /></SearchBox>
          <Pinned>
            <AppButton aria-label="Copilot"><Copilot /></AppButton>
            <AppButton aria-label="Dosyalar"><Folder /></AppButton>
            <AppButton $active aria-label="Chrome"><Chrome /></AppButton>
            <AppButton $run aria-label="Discord"><Disc $bg="#5865f2"><FaDiscord size={11} /></Disc><Badge>9+</Badge></AppButton>
            <AppButton $run aria-label="Steam"><Disc $bg="#15335c"><FaSteamSymbol size={14} /></Disc></AppButton>
            <AppButton $run aria-label="Spotify"><FaSpotify size={16} color="#1ed760" /></AppButton>
            <AppButton $run aria-label="G"><Disc $bg="#3aa0dc" $r={1}>g</Disc></AppButton>
            <AppButton $run aria-label="Tarayıcı"><Disc $bg="radial-gradient(circle, #b9d0ee 20%, #5d86ba 45%, #2f4d78)" /></AppButton>
            <AppButton $run aria-label="OBS"><Obs /><Badge /></AppButton>
            <AppButton $run aria-label="CapCut"><Disc $bg="#fff" $r={3}><CapCut /></Disc></AppButton>
            <AppButton $run aria-label="Paint"><Palette /></AppButton>
          </Pinned>
        </Apps>
        <Tray>
          <TrayIcons $gap={9}>
            <ChevronUp size={10} />
            <CloudArt />
            <Mic size={11} color="#b98fb5" />
          </TrayIcons>
          <TrayText>ENG<br />TRQ</TrayText>
          <TrayIcons $gap={4}>
            <NetGlyph />
            <Volume2 size={12} />
          </TrayIcons>
          <TrayText $right>8:51 PM<br />12/16/2025</TrayText>
        </Tray>
      </Taskbar>

      <Prompt>
        <PromptHead>
          <h2>photoshop.adobe.com şunu yapmak istiyor:</h2>
          <PlainButton $w={12} aria-label="Kapat"><X size={10} /></PlainButton>
        </PromptHead>
        <PromptRow><Clipboard size={11} /><span>Panoya kopyalanan metin ve resimleri görme</span></PromptRow>
        <PromptActions><PromptButton>İzin ver</PromptButton><PromptButton>Engelle</PromptButton></PromptActions>
      </Prompt>
      <Toast role="status">
        <Info size={13} />
        <ToastText>Katman içeriği silinemez.</ToastText>
        <Divider $h={24} $c="#5c76fc" />
        <PlainButton $w={31} $color="#fff" aria-label="Bildirimi kapat"><X size={11} /></PlainButton>
      </Toast>
      <Chat>
        <ChatLine><ChatBadge><Crown size={7} color="#1a1405" /></ChatBadge><span><ChatUser $c="#6ba6dd">XateLegal</ChatUser> : as</span></ChatLine>
        <ChatLine><span><ChatUser $c="#b889dd">pablo_escobar4735</ChatUser> : abi bu yıl senin 227 video nu izlemişim</span></ChatLine>
      </Chat>
    </Page>
  );
}
